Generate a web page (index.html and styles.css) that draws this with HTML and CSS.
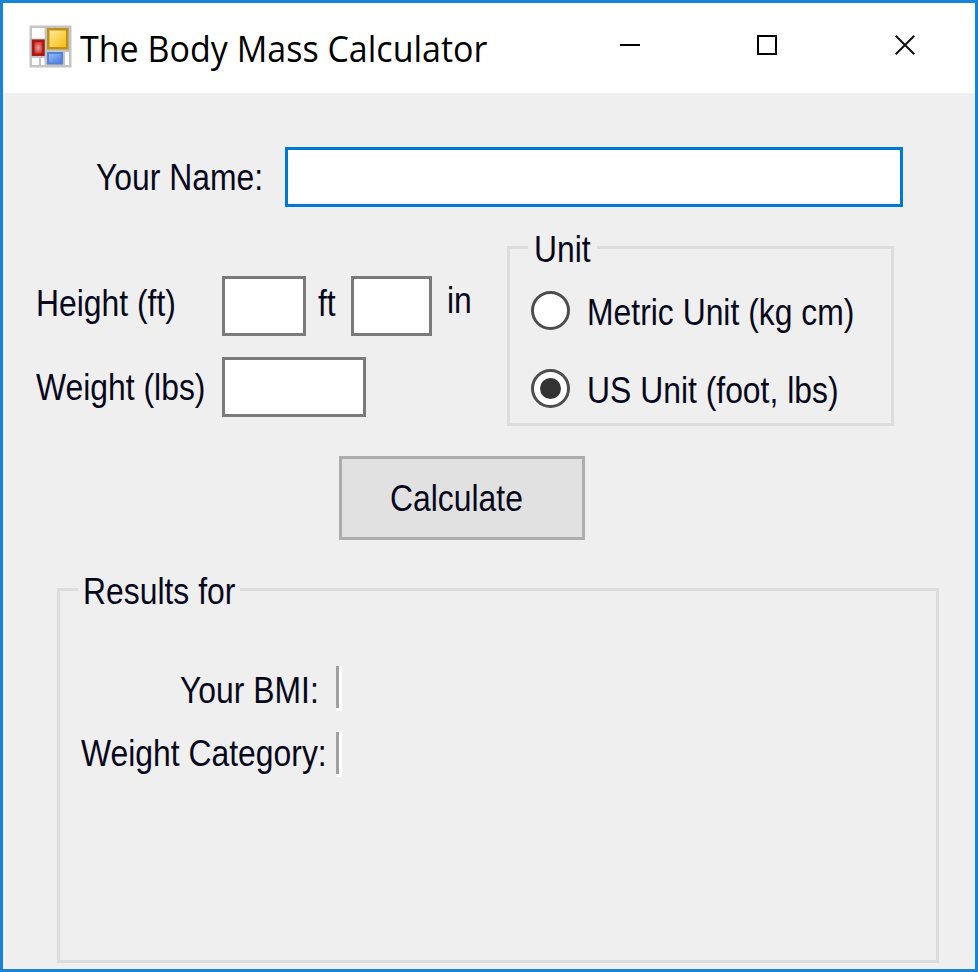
FILE: index.html
```html
<!DOCTYPE html>
<html lang="en">
<head>
<meta charset="utf-8">
<title>The Body Mass Calculator</title>
<link rel="stylesheet" href="styles.css">
</head>
<body>
<main class="window">
  <header class="titlebar">
    <svg class="app-icon" width="43" height="43" viewBox="0 0 43 43" aria-hidden="true">
      <defs>
        <linearGradient id="gold" x1="0" y1="0" x2="1" y2="1"><stop offset="0" stop-color="#ffeda8"/><stop offset=".45" stop-color="#fbd65e"/><stop offset="1" stop-color="#f5b800"/></linearGradient>
        <radialGradient id="red"><stop offset="0" stop-color="#f0a09a"/><stop offset="1" stop-color="#c42c20"/></radialGradient>
        <linearGradient id="blue" x1="0" y1="0" x2="1" y2="1"><stop offset="0" stop-color="#9ec2ff"/><stop offset="1" stop-color="#4476dc"/></linearGradient>
      </defs>
      <rect x=".5" y=".5" width="42" height="42" fill="#c4c4c4"/>
      <rect x="3" y="3" width="12.500" height="10.500" fill="#fff"/>
      <rect x="3" y="33" width="7" height="7" fill="#fff"/>
      <rect x="12" y="33" width="3.500" height="7" fill="#fff"/>
      <rect x="36" y="27" width="4" height="13" fill="#fff"/>
      <rect x="19.250" y="4.250" width="19" height="19" fill="url(#gold)" stroke="#bd9016" stroke-width="2.500"/>
      <rect x="4" y="15.700" width="10.500" height="14" fill="url(#red)" stroke="#a81810" stroke-width="2.500"/>
      <rect x="19" y="28" width="14" height="10.500" fill="url(#blue)" stroke="#5583d4" stroke-width="2"/>
    </svg>
    <h1 class="title">The Body Mass Calculator</h1>
    <div class="controls">
      <svg class="minimize" width="20" height="20" viewBox="0 0 20 20" aria-label="Minimize"><path d="M0 10H20" stroke="#000" stroke-width="2"/></svg>
      <svg width="20" height="20" viewBox="0 0 20 20" aria-label="Maximize"><rect x="1" y="1" width="18" height="18" fill="none" stroke="#000" stroke-width="2"/></svg>
      <svg width="20" height="20" viewBox="0 0 20 20" aria-label="Close"><path d="M.7.7L19.300 19.300M19.300.7L.7 19.300" stroke="#111" stroke-width="2"/></svg>
    </div>
  </header>
  <div class="client">
    <div class="name-row">
      <label class="text name-label" for="name">Your Name:</label>
      <input id="name" class="field field-name">
    </div>
    <div class="middle">
      <div class="measures">
        <div class="measure-row">
          <span class="text measure-label">Height (ft)</span>
          <input class="field field-ft" aria-label="Feet">
          <span class="text unit-ft">ft</span>
          <input class="field field-in" aria-label="Inches">
          <span class="text unit-in">in</span>
        </div>
        <div class="measure-row">
          <span class="text measure-label weight-label">Weight (lbs)</span>
          <input class="field field-weight" aria-label="Weight">
        </div>
      </div>
      <section class="group unit-group">
        <div class="legend unit-legend"><span class="text">Unit</span></div>
        <div class="option"><span class="radio"></span><span class="text">Metric Unit (kg cm)</span></div>
        <div class="option"><span class="radio checked"></span><span class="text">US Unit (foot, lbs)</span></div>
      </section>
    </div>
    <button class="calculate"><span class="text">Calculate</span></button>
    <section class="group results">
      <div class="legend results-legend"><span class="text">Results for</span></div>
      <div class="result bmi"><span class="text">Your BMI:</span><span class="value"></span></div>
      <div class="result"><span class="text">Weight Category:</span><span class="value"></span></div>
    </section>
  </div>
</main>
</body>
</html>
```
FILE: styles.css
```css
* { box-sizing: border-box; }
body { margin: 0; }
.window {
  width: 978px; height: 972px; overflow: hidden;
  border: 3px solid #1883d7; background: #efefef;
  font-family: "Liberation Sans", Arial, sans-serif; color: #08081c;
}
.titlebar { display: flex; height: 90px; padding: 22px 60px 0 26px; background: #fff; }
.app-icon { flex: none; }
.title {
  margin: -2px 0 0 8px; width: 420px; white-space: nowrap;
  font: 400 36.500px/50px "Open Sans", "Noto Sans", sans-serif; color: #000;
  transform: scaleX(.932); transform-origin: 0 0;
}
.controls { display: flex; gap: 118px; margin: 10px 0 0 auto; }
.controls svg { display: block; }
.controls .minimize { margin-right: -1px; }
.text {
  display: block; flex: none; height: 42px; font-size: 37.500px; line-height: 42px;
  white-space: nowrap; transform: scaleX(.85); transform-origin: 0 0;
}
.field { flex: none; height: 60px; margin: 0; padding: 0 6px; border: 3px solid #7a7a7a; border-radius: 0; background: #fff; outline: 0; font-size: 32px; }
.client { display: flex; flex-direction: column; height: 876px; }
.name-row { display: flex; padding: 54px 0 0 93px; }
.name-label { width: 189px; margin-top: 9px; }
.field-name { width: 618px; border-color: #0078d7; }
.middle { display: flex; padding: 39px 0 0 33px; }
.measures { display: flex; flex-direction: column; gap: 21px; width: 471px; padding-top: 30px; }
.measure-row { display: flex; height: 60px; }
.measure-label { width: 186px; margin: 6px 0 0; }
.weight-label { margin-top: 9px; }
.field-ft { width: 84px; }
.unit-ft { width: 33px; margin: 6px 0 0 12px; }
.field-in { width: 81px; }
.unit-in { margin: 3px 0 0 15px; }
.field-weight { width: 144px; }
.group { border: 3px solid #dcdcdc; }
.legend { height: 42px; background: #efefef; }
.unit-group { width: 387px; height: 180px; }
.unit-legend { width: 69px; margin: -21px 0 0 18px; padding-left: 6px; }
.option { display: flex; height: 42px; margin: 21px 0 0 21px; }
.option + .option { margin-top: 36px; }
.option .text { margin-left: 17px; }
.radio { display: flex; flex: none; width: 39px; height: 39px; border: 3px solid #4d4d4d; border-radius: 50%; background: #fff; }
.radio.checked::after { content: ""; width: 21px; height: 21px; margin: auto; border-radius: 50%; background: #333; }
.calculate { width: 246px; height: 84px; margin: 30px 0 0 336px; padding: 0 0 0 48px; border: 3px solid #adadad; border-radius: 0; background: #e1e1e1; color: inherit; font-family: inherit; text-align: left; }
.results { width: 882px; height: 375px; margin: 48px 0 0 54px; }
.results-legend { width: 162px; margin: -21px 0 0 18px; padding-left: 5px; }
.result { display: flex; height: 45px; margin: 21px 0 0 21px; }
.result.bmi { margin-top: 54px; }
.result .text { width: 255px; margin-top: 3px; }
.result + .result:not(.bmi) .text { margin-top: 0; }
.result.bmi .text { width: 156px; margin-left: 99px; }
.value { width: 6px; height: 45px; border-right: 3px solid #fff; border-bottom: 3px solid #fff; background: #a0a0a0; }
```
